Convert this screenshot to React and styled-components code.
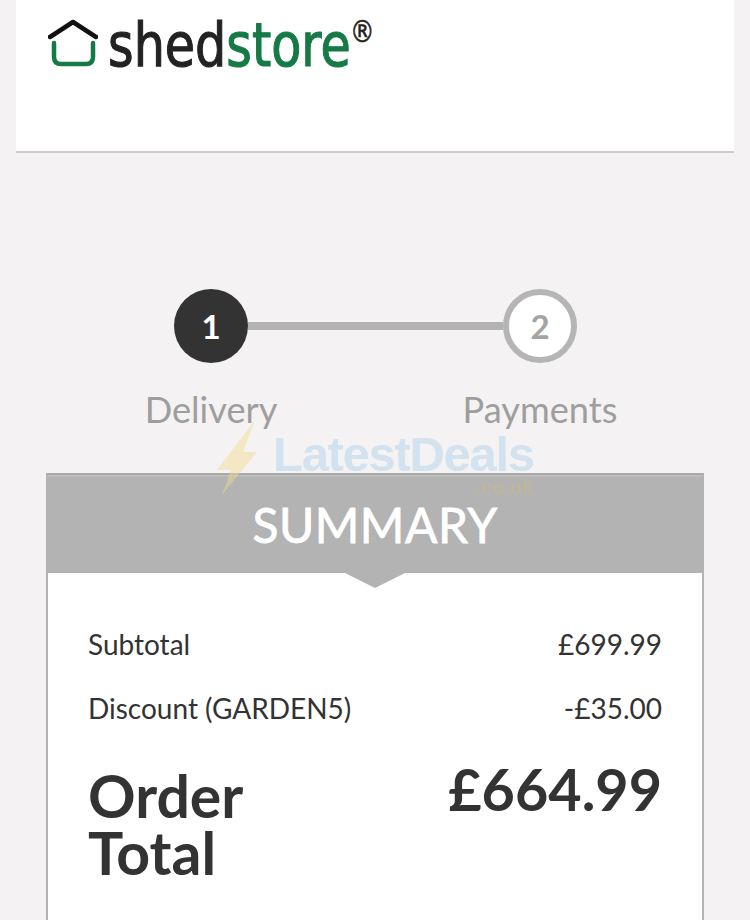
import React from 'react';
import styled, { createGlobalStyle } from 'styled-components';

const GlobalStyle = createGlobalStyle`
    html, body {
        margin: 0;
        padding: 0;
        background: #f4f2f3;
    }
    * {
        box-sizing: border-box;
    }
`;

const Page = styled.div`
    position: relative;
    width: 750px;
    height: 920px;
    overflow: hidden;
    background: #f4f2f3;
    font-family: Lato, "Liberation Sans", sans-serif;
    color: #333;
`;

const Header = styled.header`
    height: 153px;
    margin: 0 16px;
    padding: 17px 32px 0;
    background: #fff;
    border-bottom: 2px solid #cdcbcc;
`;

const Logo = styled.div`
    display: flex;
    align-items: flex-start;
    gap: 10px;
`;

const LogoText = styled.div`
    position: relative;
    font-family: "DejaVu Sans", sans-serif;
    font-size: 60px;
    line-height: 56px;
    letter-spacing: 0;
    color: #222;
    -webkit-text-stroke: 1.2px currentColor;
    transform: scaleX(0.82);
    transform-origin: left top;
    white-space: nowrap;
`;

const LogoAccent = styled.span`
    color: #167a46;
`;

const LogoMark = styled.span`
    position: absolute;
    left: 295px;
    top: -5px;
    font-size: 30px;
    line-height: 40px;
    color: #222;
    -webkit-text-stroke: 0.6px currentColor;
`;

const Stepper = styled.div`
    display: flex;
    width: 403px;
    margin: 136px 0 0 174px;
`;

const Step = styled.div`
    display: flex;
    flex-direction: column;
    align-items: center;
    width: 74px;
    flex: none;
`;

const StepCircle = styled.div`
    display: flex;
    align-items: center;
    justify-content: center;
    width: 74px;
    height: 74px;
    border-radius: 50%;
    font-size: 33px;
    font-weight: 700;
    background: ${(p) => (p.$active ? '#333' : '#fff')};
    color: ${(p) => (p.$active ? '#fff' : '#a3a3a3')};
    border: ${(p) => (p.$active ? 'none' : '6px solid #b5b5b5')};
`;

const StepLabel = styled.div`
    margin-top: 25px;
    font-size: 36.2px;
    line-height: 42px;
    white-space: nowrap;
    color: #9e9e9e;
`;

const Connector = styled.div`
    flex: 1;
    height: 8px;
    margin-top: 33px;
    background: #b3b3b3;
`;

const Card = styled.section`
    width: 658px;
    margin: 43px 0 0 46px;
    background: #fff;
    border: 2px solid #b3b3b3;
    border-top-color: #a9a9a9;
    border-bottom: none;
    height: 500px;
`;

const CardTitle = styled.h2`
    position: relative;
    margin: 0;
    height: 98px;
    background: #b3b3b3;
    box-shadow: inset 0 2px 0 #bdbdbd;
    color: #fff;
    font-size: 48px;
    font-weight: 400;
    line-height: 100px;
    letter-spacing: 0.5px;
    text-align: center;
    -webkit-text-stroke: 0.8px currentColor;

    &::after {
        content: '';
        position: absolute;
        left: 50%;
        top: 98px;
        margin-left: -30px;
        border-left: 30px solid transparent;
        border-right: 30px solid transparent;
        border-top: 15px solid #b3b3b3;
    }
`;

const CardBody = styled.div`
    padding: 49px 40px 0;
`;

const Row = styled.div`
    display: flex;
    justify-content: space-between;
    height: 64px;
    font-size: 28px;
    line-height: 44px;
    color: #333;
`;

const TotalRow = styled.div`
    display: flex;
    justify-content: space-between;
    align-items: flex-start;
    margin-top: 4px;
    font-weight: 700;
`;

const TotalLabel = styled.div`
    width: 200px;
    margin-top: 13px;
    font-size: 59px;
    line-height: 57px;
`;

const TotalValue = styled.div`
    font-size: 57.5px;
    line-height: 70px;
`;

const Watermark = styled.div`
    position: absolute;
    left: 216px;
    top: 420px;
    width: 320px;
    height: 76px;
    pointer-events: none;
`;

const WatermarkBolt = styled.svg`
    position: absolute;
    left: 0;
    top: 0;
`;

const WatermarkName = styled.div`
    position: absolute;
    left: 57px;
    top: 12px;
    font-family: "Liberation Sans", sans-serif;
    font-size: 49px;
    line-height: 44px;
    font-weight: 700;
    letter-spacing: -1.3px;
    white-space: nowrap;
    color: #d2e2ee;
`;

const WatermarkDomain = styled.div`
    position: absolute;
    right: 3px;
    top: 59px;
    font-family: "Liberation Sans", sans-serif;
    font-size: 20px;
    font-weight: 700;
    line-height: 16px;
    color: #bdb69c;
`;

const App = () => (
    <>
        <GlobalStyle />
        <Page>
            <Header>
                <Logo>
                    <svg width="50" height="50" viewBox="0 0 50 50" fill="none">
                        <path d="M2 20 L25 5 L48 20" stroke="#111" strokeWidth="4.5" strokeLinecap="round" strokeLinejoin="round" />
                        <path d="M6 26 V40 Q6 47 13 47 H38 Q45 47 45 40 V26" stroke="#167a46" strokeWidth="4.5" strokeLinecap="round" />
                    </svg>
                    <LogoText>
                        shed<LogoAccent>store</LogoAccent>
                        <LogoMark>®</LogoMark>
                    </LogoText>
                </Logo>
            </Header>
            <Stepper>
                <Step>
                    <StepCircle $active>1</StepCircle>
                    <StepLabel>Delivery</StepLabel>
                </Step>
                <Connector />
                <Step>
                    <StepCircle>2</StepCircle>
                    <StepLabel>Payments</StepLabel>
                </Step>
            </Stepper>
            <Card>
                <CardTitle>SUMMARY</CardTitle>
                <CardBody>
                    <Row>
                        <span>Subtotal</span>
                        <span>£699.99</span>
                    </Row>
                    <Row>
                        <span>Discount (GARDEN5)</span>
                        <span>-£35.00</span>
                    </Row>
                    <TotalRow>
                        <TotalLabel>Order Total</TotalLabel>
                        <TotalValue>£664.99</TotalValue>
                    </TotalRow>
                </CardBody>
            </Card>
            <Watermark>
                <WatermarkBolt width="44" height="76" viewBox="0 0 44 76">
                    <path d="M39 0 L27 32 L41 32 L6 75 L15 50 L1 50 Z" fill="#f2d98c" opacity="0.45" />
                </WatermarkBolt>
                <WatermarkName>LatestDeals</WatermarkName>
                <WatermarkDomain>.co.uk</WatermarkDomain>
            </Watermark>
        </Page>
    </>
);

export default App;
